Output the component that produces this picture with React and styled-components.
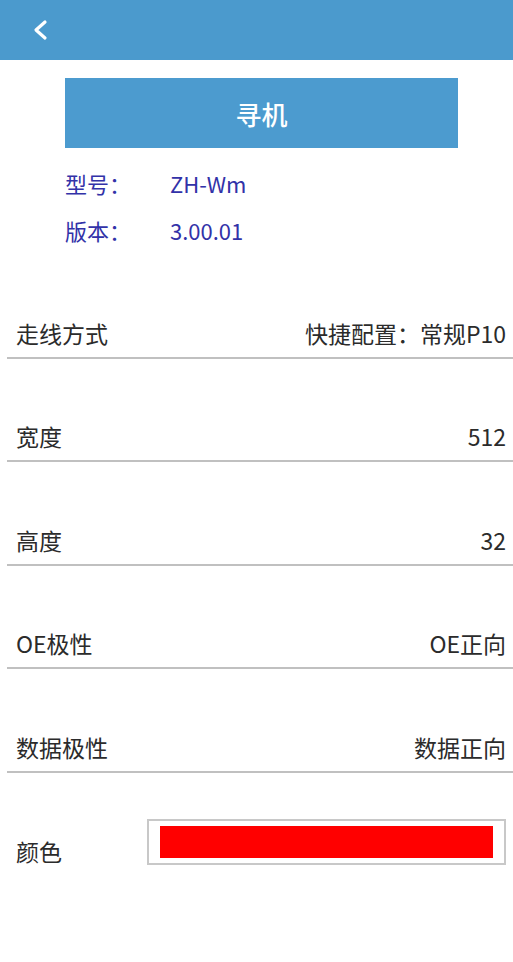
import styled, { createGlobalStyle } from 'styled-components'

const GlobalStyle = createGlobalStyle`
    body {
        margin: 0;
        background: #fff;
        font-family: "Noto Sans CJK SC", "Noto Sans", sans-serif;
    }
`

const settings = [
    { label: '走线方式', value: '快捷配置：常规P10' },
    { label: '宽度', value: '512' },
    { label: '高度', value: '32' },
    { label: 'OE极性', value: 'OE正向' },
    { label: '数据极性', value: '数据正向' },
]

function App() {
    return (
        <Page>
            <GlobalStyle />
            <Header>
                <BackButton aria-label="back">
                    <svg width="18" height="22" viewBox="0 0 18 22">
                        <path d="M14 3 L5 11 L14 19" fill="none" stroke="#fff" strokeWidth="3.2" strokeLinecap="round" strokeLinejoin="round" />
                    </svg>
                </BackButton>
            </Header>

            <SearchButton>寻机</SearchButton>

            <Info>
                <InfoRow>
                    <InfoLabel>型号：</InfoLabel>
                    <span>ZH-Wm</span>
                </InfoRow>
                <InfoRow>
                    <InfoLabel>版本：</InfoLabel>
                    <span>3.00.01</span>
                </InfoRow>
            </Info>

            <List>
                {settings.map(item => (
                    <Row key={item.label}>
                        <span>{item.label}</span>
                        <span>{item.value}</span>
                    </Row>
                ))}
                <ColorRow>
                    <ColorLabel>颜色</ColorLabel>
                    <Swatch>
                        <SwatchFill $color="#ff0000" />
                    </Swatch>
                </ColorRow>
            </List>
        </Page>
    )
}

export default App

const Page = styled.div`
    width: 513px;
    min-height: 962px;
    background: #fff;
`

const Header = styled.header`
    height: 60px;
    background: #4b9acd;
    display: flex;
    align-items: center;
    padding-left: 31px;
`

const BackButton = styled.button`
    border: none;
    background: none;
    padding: 0;
    display: flex;
    align-items: center;
    cursor: pointer;
`

const SearchButton = styled.button`
    display: flex;
    align-items: center;
    justify-content: center;
    margin: 18px 0 0 65px;
    width: 393px;
    height: 70px;
    border: none;
    background: #4c9bcf;
    color: #fff;
    font-family: inherit;
    font-size: 26px;
    font-weight: 500;
    cursor: pointer;
`

const Info = styled.div`
    padding: 20px 0 0 65px;
    display: flex;
    flex-direction: column;
    gap: 17px;
    color: #3232a8;
    font-size: 22px;
`

const InfoRow = styled.div`
    display: flex;
    align-items: center;
    height: 30px;
`

const InfoLabel = styled.span`
    width: 105px;
`

const List = styled.div`
    margin-top: 10px;
`

const Row = styled.div`
    height: 103.5px;
    box-sizing: border-box;
    margin-left: 7px;
    padding: 0 7px 10px 9px;
    border-bottom: 2px solid #c0c0c0;
    display: flex;
    align-items: flex-end;
    justify-content: space-between;
    font-size: 23px;
    line-height: 28px;
    color: #2b2b2b;
`

const ColorRow = styled.div`
    display: flex;
    align-items: flex-end;
    padding: 46px 7px 0 16px;
`

const ColorLabel = styled.span`
    width: 131px;
    font-size: 23px;
    line-height: 28px;
    color: #2b2b2b;
    margin-bottom: 0;
`

const Swatch = styled.div`
    flex: 1;
    height: 46px;
    box-sizing: border-box;
    border: 2px solid #c8c8c8;
    padding: 5px 11px;
    display: flex;
`

const SwatchFill = styled.div`
    flex: 1;
    background: ${p => p.$color};
`
